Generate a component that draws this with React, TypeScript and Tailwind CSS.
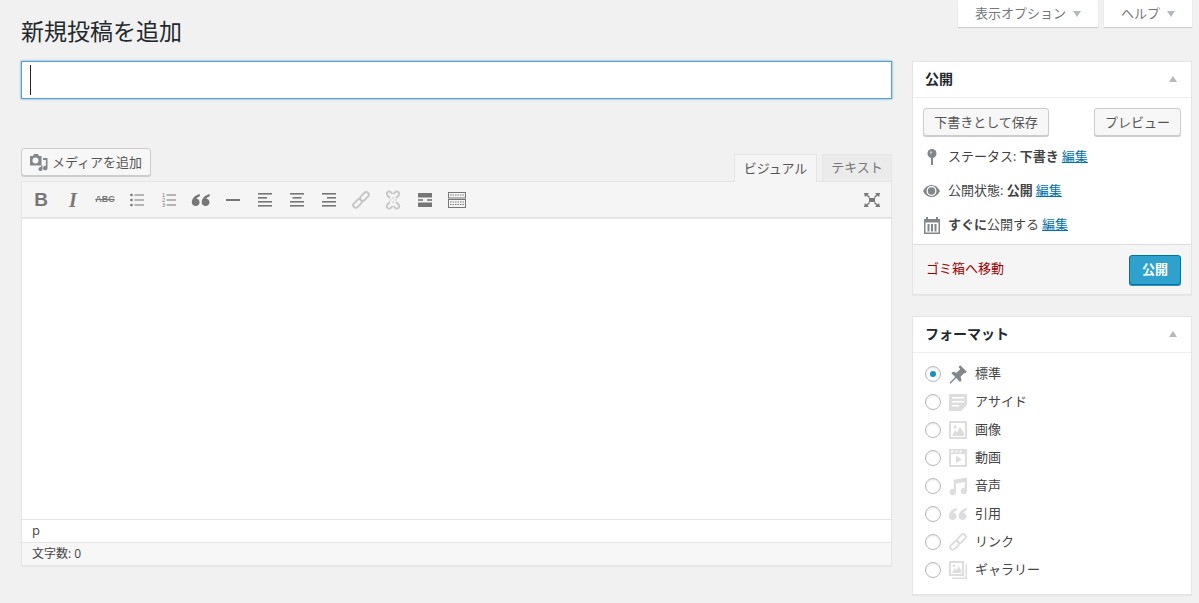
import { ReactNode } from "react";

const font = { fontFamily: '"Open Sans", "Noto Sans CJK JP", sans-serif' };

const Svg = ({ children, className }: { children: ReactNode; className?: string }) => (
  <svg viewBox="0 0 20 20" width="20" height="20" fill="currentColor" className={className}>
    {children}
  </svg>
);

const Lines = ({ rows }: { rows: [number, number, number][] }) => (
  <Svg>
    {rows.map(([x, y, w], i) => (
      <rect key={i} x={x} y={y} width={w} height={1.6} />
    ))}
  </Svg>
);

const LinkIcon = () => (
  <Svg>
    <g fill="none" stroke="currentColor" strokeWidth="1.900">
      <rect x="1.500" y="10.900" width="10" height="5.200" rx="2.600" transform="rotate(-45 6.500 13.500)" />
      <rect x="8.500" y="3.900" width="10" height="5.200" rx="2.600" transform="rotate(-45 13.500 6.500)" />
    </g>
  </Svg>
);

const comma = "M8.800 4C4.300 5 .8 8.200.8 12.300c0 2.300 1.700 3.700 3.800 3.700 2.300 0 4-1.600 4-3.800 0-2-1.400-3.300-3.100-3.500.6-1.100 1.900-2 3.300-2.400z";

const QuoteIcon = () => (
  <Svg>
    <path d={comma} />
    <path d={comma} transform="translate(9.900 0)" />
  </Svg>
);

const toolbarIcons: ReactNode[] = [
  <span className="text-[19px] font-bold leading-none" style={{ fontFamily: '"Liberation Sans", sans-serif' }}>B</span>,
  <span className="text-[20px] font-bold italic leading-none" style={{ fontFamily: '"Liberation Serif", serif' }}>I</span>,
  <span className="text-[9px] font-bold line-through leading-none" style={{ fontFamily: '"Liberation Sans", sans-serif' }}>ABC</span>,
  <Svg>
    <circle cx="4.500" cy="5" r="1.300" />
    <circle cx="4.500" cy="10" r="1.300" />
    <circle cx="4.500" cy="15" r="1.300" />
    <rect x="7.500" y="4.500" width="9.500" height="1" />
    <rect x="7.500" y="9.500" width="9.500" height="1" />
    <rect x="7.500" y="14.500" width="9.500" height="1" />
  </Svg>,
  <Svg>
    <g fontSize="5.500" fontFamily="Liberation Sans" textAnchor="middle">
      <text x="4.500" y="6.800">1</text>
      <text x="4.500" y="11.900">2</text>
      <text x="4.500" y="17">3</text>
    </g>
    <rect x="7.500" y="4.500" width="9.500" height="1" />
    <rect x="7.500" y="9.500" width="9.500" height="1" />
    <rect x="7.500" y="14.500" width="9.500" height="1" />
  </Svg>,
  <QuoteIcon />,
  <Svg><rect x="3" y="9" width="14" height="2" /></Svg>,
  <Lines rows={[[3, 3, 14], [3, 7, 9], [3, 11, 14], [3, 15, 14]]} />,
  <Lines rows={[[3, 3, 14], [5.500, 7, 9], [3, 11, 14], [3, 15, 14]]} />,
  <Lines rows={[[3, 3, 14], [8, 7, 9], [3, 11, 14], [3, 15, 14]]} />,
  <span className="text-[#c5c5c5]"><LinkIcon /></span>,
  <span className="text-[#c5c5c5]">
    <Svg>
      <path
        d="M7 8L4.500 5.500a2.300 2.300 0 0 1 3.300-3.300L9.500 4M13 8l2.500-2.500a2.300 2.300 0 0 0-3.300-3.300L10.500 4M7 12l-2.500 2.500a2.300 2.300 0 0 0 3.300 3.300L9.500 16M13 12l2.500 2.500a2.300 2.300 0 0 1-3.300 3.300L10.500 16"
        fill="none"
        stroke="currentColor"
        strokeWidth="1.800"
      />
      <path d="M10 7v2M10 11v2M6.500 10h2M11.500 10h2" fill="none" stroke="currentColor" strokeWidth="1" />
    </Svg>
  </span>,
  <Svg>
    <rect x="3" y="3" width="14" height="4.500" />
    <rect x="3" y="9.200" width="5" height="1.600" />
    <rect x="12" y="9.200" width="5" height="1.600" />
    <rect x="3" y="12.500" width="14" height="4.500" />
  </Svg>,
  <svg viewBox="0 0 20 20" width="20" height="20" fill="none" stroke="currentColor" className="block">
    <rect x="1.500" y="2.500" width="17" height="5.500" />
    <rect x="1.500" y="9.500" width="17" height="8" />
    <path d="M3 5h14M3 12h14M3 14.500h14" strokeDasharray="1.500 1" strokeWidth="1.200" />
  </svg>,
];

const Button = ({ children, className = "" }: { children: ReactNode; className?: string }) => (
  <button className={`h-[28px] rounded-[3px] border border-[#cccccc] bg-[#f7f7f7] text-[13px] leading-none text-[#555555] shadow-[0_1px_0_#cccccc] flex items-center justify-center ${className}`}>
    {children}
  </button>
);

const ScreenTab = ({ label, className }: { label: string; className: string }) => (
  <div className={`h-[27px] bg-white shadow-[0_1px_1px_rgba(0,0,0,0.15)] flex items-center justify-center gap-[7px] text-[13px] text-[#72777c] ${className}`}>
    {label}
    <span className="mt-[1px] h-0 w-0 border-x-[4px] border-t-[6px] border-x-transparent border-t-[#b4b9be]" />
  </div>
);

const Caret = () => (
  <span className="h-0 w-0 border-x-[4.500px] border-b-[6px] border-x-transparent border-b-[#b4b9be]" />
);

const BoxHeader = ({ title }: { title: string }) => (
  <div className="h-[36px] shrink-0 border-b border-[#eeeeee] pb-[2px] pl-[12px] pr-[14px] flex items-center justify-between">
    <h2 className="text-[14px] font-bold text-[#23282d]">{title}</h2>
    <Caret />
  </div>
);

const EditLink = () => <a className="ml-[3px] text-[13px] text-[#0073aa] underline">編集</a>;

const formats: { label: string; icon: ReactNode; dark?: boolean }[] = [
  {
    label: "標準",
    dark: true,
    icon: (
      <Svg>
        <path d="M10.440 3.020l1.820-1.820 6.530 6.530-1.820 1.820-.65-.65-3.680 3.680.8 3.870-1.450 1.450-3.820-3.820-5.680 5.680-.98-.98 5.680-5.680-3.820-3.820 1.450-1.450 3.870.8 3.680-3.680z" />
      </Svg>
    ),
  },
  {
    label: "アサイド",
    icon: (
      <Svg>
        <path fillRule="evenodd" d="M1 2h18v11l-6 6H1zM4 5v1.500h12V5zm0 4v1.500h12V9zm0 4v1.500h7V13z" />
      </Svg>
    ),
  },
  {
    label: "画像",
    icon: (
      <Svg>
        <path fillRule="evenodd" d="M1 1h18v18H1zM3 3v14h14V3zM4 16l3-6 2 2.500 3-5.500 4 6v3zM7 5.500a1.500 1.500 0 1 1 0 3 1.500 1.500 0 0 1 0-3z" />
      </Svg>
    ),
  },
  {
    label: "動画",
    icon: (
      <Svg>
        <path fillRule="evenodd" d="M1 1h18v18H1zM3 6v11h14V6zM3 2.500v2h2l1-2zm5 0l-1 2h2l1-2zm4 0l-1 2h2l1-2zM8 8l6 3.500L8 15z" />
      </Svg>
    ),
  },
  {
    label: "音声",
    icon: (
      <Svg>
        <path d="M19 1.500v13.500a3.200 3.200 0 1 1-2.200-3V6L8 7.500V16a3.200 3.200 0 1 1-2.200-3V3.800z" />
      </Svg>
    ),
  },
  { label: "引用", icon: <QuoteIcon /> },
  { label: "リンク", icon: <LinkIcon /> },
  {
    label: "ギャラリー",
    icon: (
      <Svg>
        <path fillRule="evenodd" d="M1 1h15v15H1zM3 3v11h11V3zM4 13l2.500-5 2 2 2-4 2.500 4v3zM6 4.500a1.300 1.300 0 1 1 0 2.600 1.300 1.300 0 0 1 0-2.600zM17.500 4H19v15H4v-1.500h13.500z" />
      </Svg>
    ),
  },
];

export default function App() {
  return (
    <div className="h-[603px] w-[1199px] overflow-hidden bg-[#f1f1f1] pl-[21px] pr-[7px]" style={font}>
      <div className="flex h-[61px] justify-between">
        <h1 className="pt-[14px] text-[23px] leading-[34px] text-[#23282d]">新規投稿を追加</h1>
        <div className="flex gap-[6px]">
          <ScreenTab label="表示オプション" className="w-[140px]" />
          <ScreenTab label="ヘルプ" className="w-[88px]" />
        </div>
      </div>

      <div className="flex justify-between">
        <div className="w-[871px]">
          <div className="flex h-[38px] items-center border border-[#5b9dd9] bg-white pl-[8px] shadow-[0_0_2px_rgba(30,140,190,0.8)]">
            <span className="h-[30px] w-px bg-[#222222]" />
          </div>

          <div className="mt-[49px] flex items-end justify-between">
            <Button className="mb-[5px] w-[130px] gap-[4px]">
              <svg viewBox="0 0 18 18" width="18" height="18" fill="#82878c">
                <path fillRule="evenodd" d="M0 3h3l1-2h4l1 2h2.500v9.500H0zM5.500 4.500a3 3 0 1 0 0 6 3 3 0 0 0 0-6z" />
                <path d="M13 5h4.500v10a2.200 2.200 0 1 1-1.600-2V7H13zM11 12.500h1.500V16a2 2 0 1 1-1.500-1.900z" />
              </svg>
              メディアを追加
            </Button>
            <div className="relative top-px flex gap-[5px] text-[13px]">
              <div className="flex h-[28px] w-[83px] items-center justify-center border border-b-0 border-[#e5e5e5] bg-[#f5f5f5] text-[#555555]">
                ビジュアル
              </div>
              <div className="flex h-[28px] w-[70px] items-center justify-center border border-[#e5e5e5] bg-[#ebebeb] text-[#777777]">
                テキスト
              </div>
            </div>
          </div>

          <div className="border border-[#e5e5e5] bg-white shadow-[0_1px_1px_rgba(0,0,0,0.04)]">
            <div className="flex h-[37px] items-center justify-between border-b-2 border-[#e5e5e5] bg-[#f5f5f5] pl-[3px] pr-[3px] text-[#777777]">
              <div className="flex">
                {toolbarIcons.map((icon, i) => (
                  <div key={i} className="flex h-[30px] w-[32px] items-center justify-center">
                    {icon}
                  </div>
                ))}
              </div>
              <div className="flex h-[30px] w-[32px] items-center justify-center">
                <Svg>
                  <rect x="7" y="8" width="6" height="4" />
                  <path d="M2 3h5l-1.500 1.500L8 7 7 8 4.500 5.500 3 7zM18 3h-5l1.500 1.500L12 7l1 1 2.500-2.500L17 7zM2 17h5l-1.500-1.500L8 13l-1-1-2.500 2.500L3 13zM18 17h-5l1.500-1.500L12 13l1-1 2.500 2.500L17 13z" />
                </Svg>
              </div>
            </div>
            <div className="h-[300px]" />
            <div className="flex h-[23px] items-center border-t border-[#e5e5e5] pl-[10px] text-[13px] text-[#444444]">p</div>
            <div className="flex h-[23px] items-center border-t border-[#e5e5e5] bg-[#f7f7f7] pl-[10px] text-[12px] text-[#444444]">文字数: 0</div>
          </div>
        </div>

        <div className="w-[280px]">
          <div className="border border-[#e5e5e5] bg-white shadow-[0_1px_1px_rgba(0,0,0,0.04)]">
            <BoxHeader title="公開" />
            <div className="flex justify-between px-[10px] pt-[10px]">
              <Button className="w-[126px]">下書きとして保存</Button>
              <Button className="w-[87px]">プレビュー</Button>
            </div>
            <div className="mt-[4px] px-[10px] pb-[2px] text-[13px] text-[#444444]">
              <div className="flex h-[34px] items-center">
                <span className="flex w-[17px] justify-center">
                  <svg viewBox="0 0 10 16" width="10" height="16" fill="#82878c">
                    <circle cx="5" cy="4.500" r="4.500" />
                    <circle cx="4" cy="3.500" r="1.200" fill="#c5c7c9" />
                    <rect x="4" y="7" width="2" height="9" />
                  </svg>
                </span>
                <span className="ml-[8px]">ステータス: <b className="font-bold">下書き</b></span>
                <EditLink />
              </div>
              <div className="flex h-[34px] items-center">
                <svg viewBox="0 0 17 14" width="17" height="14">
                  <path d="M0 7C2 3 5 1 8.500 1S15 3 17 7c-2 4-5 6-8.500 6S2 11 0 7z" fill="#82878c" />
                  <circle cx="8.500" cy="7" r="5" fill="#ffffff" />
                  <circle cx="8.500" cy="7" r="3.700" fill="#82878c" />
                </svg>
                <span className="ml-[8px]">公開状態: <b className="font-bold">公開</b></span>
                <EditLink />
              </div>
              <div className="flex h-[34px] items-center">
                <svg viewBox="0 0 18 18" width="18" height="18" fill="#82878c">
                  <path fillRule="evenodd" d="M1 3h2V1h2v2h8V1h2v2h2v15H1zM2.500 6.500v10h13v-10zM4.500 8h2v7.500h-2zM8 8h2v7.500H8zM11.500 8h2v7.500h-2z" />
                </svg>
                <span className="ml-[7px]"><b className="font-bold">すぐに</b>公開する</span>
                <EditLink />
              </div>
            </div>
            <div className="flex h-[50px] items-start justify-between border-t border-[#dddddd] bg-[#f5f5f5] pl-[13px] pr-[10px] pt-[10px]">
              <a className="pt-[4px] text-[13px] text-[#a00000]">ゴミ箱へ移動</a>
              <button className="flex h-[30px] w-[52px] items-center justify-center rounded-[3px] border border-[#0073aa] bg-[#2ea2cc] text-[13px] font-bold text-white shadow-[0_1px_0_rgba(0,115,170,0.8)]">
                公開
              </button>
            </div>
          </div>

          <div className="mt-[21px] border border-[#e5e5e5] bg-white pb-[10px] shadow-[0_1px_1px_rgba(0,0,0,0.04)]">
            <BoxHeader title="フォーマット" />
            <div className="pt-[7px] pl-[12px]">
              {formats.map((f, i) => (
                <div key={f.label} className="flex h-[28px] items-center text-[13px] text-[#444444]">
                  <span className="flex h-[16px] w-[16px] items-center justify-center rounded-full border border-[#b4b9be] bg-white shadow-[inset_0_1px_2px_rgba(0,0,0,0.1)]">
                    {i === 0 && <span className="h-[6px] w-[6px] rounded-full bg-[#1e8cbe]" />}
                  </span>
                  <span className={`ml-[7px] flex w-[20px] justify-center ${f.dark ? "text-[#82878c]" : "text-[#dddddd]"}`}>
                    {f.icon}
                  </span>
                  <span className="ml-[7px]">{f.label}</span>
                </div>
              ))}
            </div>
          </div>
        </div>
      </div>
    </div>
  );
}
